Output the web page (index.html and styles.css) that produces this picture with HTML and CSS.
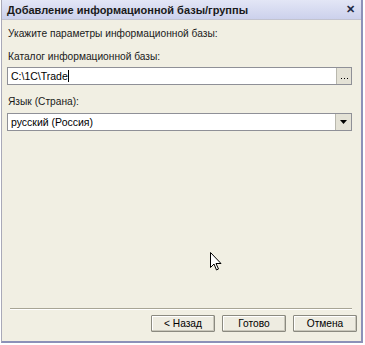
FILE: index.html
```html
<!DOCTYPE html>
<html>
  <head>
    <meta charset="UTF-8" />
    <title>Добавление информационной базы/группы</title>
    <link rel="stylesheet" href="styles.css">
  </head>

  <body>
    <div class="window">
      <div class="titlebar">
        <span class="title">Добавление информационной базы/группы</span>
        <span class="close">&#x2715;</span>
      </div>

      <div class="content">
        <div class="hint">Укажите параметры информационной базы:</div>

        <label class="label">Каталог информационной базы:</label>
        <div class="field">
          <div class="field-text">C:\1C\Trade<span class="caret"></span></div>
          <div class="field-btn dots">
            <svg width="7" height="1" viewBox="0 0 7 1"><path d="M0 0h1v1H0zM3 0h1v1H3zM6 0h1v1H6z" fill="#000"/></svg>
          </div>
        </div>

        <label class="label">Язык (Страна):</label>
        <div class="field">
          <div class="field-text">русский (Россия)</div>
          <div class="field-btn">
            <svg width="7" height="4" viewBox="0 0 7 4"><path d="M0 0h7L3.5 4z" fill="#000"/></svg>
          </div>
        </div>

        <div class="spacer">
          <svg class="cursor" width="12" height="19" viewBox="0 0 12 19">
            <path d="M0.5 0.5v15l3.5-3.5 2.5 6 2-1-2.5-5.5h5z" fill="#fff" stroke="#000" stroke-width="1"/>
          </svg>
        </div>

        <div class="separator"></div>

        <div class="buttons">
          <button class="btn">&lt; Назад</button>
          <button class="btn">Готово</button>
          <button class="btn">Отмена</button>
        </div>
      </div>
    </div>
  </body>
</html>
```

FILE: styles.css
```css
body {
  margin: 0;
  padding: 0;
  background: #fff;
  font-family: "Liberation Sans", Arial, sans-serif;
  font-size: 10.2px;
  color: #1a1a1a;
}

.window {
  width: 362px;
  height: 343px;
  margin-left: 1px;
  display: flex;
  flex-direction: column;
  border-left: 1px solid #a9a9b8;
  border-right: 2px solid #8c91b8;
  border-bottom: 2px solid #8c91b8;
  box-sizing: border-box;
  background: #f1efe3;
}

.titlebar {
  height: 20px;
  display: flex;
  align-items: center;
  justify-content: space-between;
  padding: 0 6px 0 5px;
  background: linear-gradient(#e3e6f6, #ccd1ec);
  border-bottom: 1px solid #c2c3cf;
  box-sizing: border-box;
}

.title {
  font-weight: bold;
  font-size: 11px;
  color: #1a1a1a;
}

.close {
  font-weight: bold;
  font-size: 11px;
  color: #1f2a44;
}

.content {
  flex: 1;
  display: flex;
  flex-direction: column;
  padding: 8px 4px 7px 5px;
}

.hint {
  margin: 0 0 12px 1px;
}

.label {
  display: block;
  margin: 0 0 5px 1px;
}

.field {
  display: flex;
  height: 18px;
  margin: 0 5px 11px 0;
  border: 1px solid #8f9097;
  background: #fff;
  box-sizing: border-box;
}

.field + .label {
  margin-bottom: 6px;
}

.field-text {
  flex: 1;
  padding: 2px 3px 0;
  font-size: 10.5px;
  color: #000;
  white-space: nowrap;
}

.caret {
  display: inline-block;
  width: 1px;
  height: 12px;
  background: #000;
  vertical-align: -2px;
}

.field-btn {
  width: 15px;
  display: flex;
  align-items: center;
  justify-content: center;
  background: #e4e2d6;
  border-left: 1px solid #b9b8ae;
}

.dots {
  align-items: flex-end;
  padding-bottom: 5px;
  box-sizing: border-box;
}

.spacer {
  flex: 1;
  position: relative;
}

.cursor {
  position: absolute;
  left: 203px;
  top: 110px;
}

.separator {
  height: 1px;
  margin: 0 5px 5px 3px;
  background: #a8a595;
  border-bottom: 1px solid #fff;
}

.buttons {
  display: flex;
  justify-content: flex-end;
  gap: 7px;
  margin-bottom: 2px;
}

.btn {
  width: 64px;
  height: 17px;
  padding: 0;
  font-family: inherit;
  font-size: 10.2px;
  color: #000;
  background: #eeece1;
  border: 1px solid #8b8a80;
  border-radius: 1px;
  box-shadow: inset -1px -1px 0 #c9c7bb, inset 1px 1px 0 #fff;
}
```
